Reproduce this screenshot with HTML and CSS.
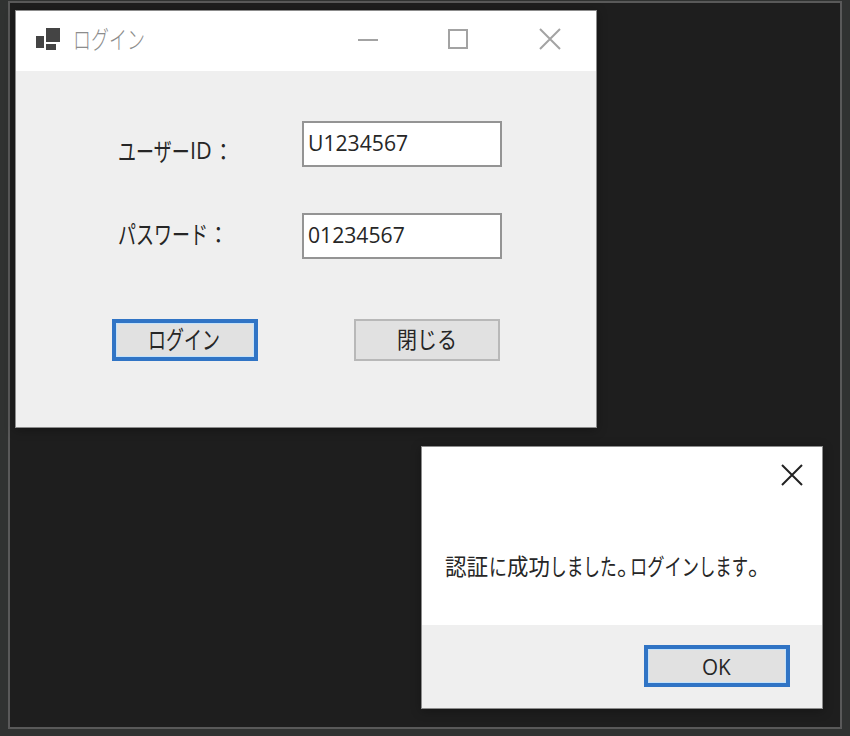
FILE: index.html
```html
<!DOCTYPE html>
<html lang="ja">
<head>
<meta charset="utf-8">
<title>ログイン</title>
<link rel="stylesheet" href="styles.css">
</head>
<body>
<main class="desktop">
  <section class="window login">
    <header class="titlebar">
      <svg class="app-icon" width="26" height="24" viewBox="0 0 26 24"><path d="M11 1h14v14H11zM1 9h8v12H1zM11 17h10v6H11z" fill="#444"/></svg>
      <h1 class="title"><span class="kana">ログイン</span></h1>
      <svg class="controls" width="204" height="24" viewBox="0 0 204 24" fill="none" stroke="#a3a3a3" stroke-width="2"><path d="M1 13H21"/><path d="M92 3H110V21H92z"/><path d="M183 2L203 22M203 2L183 22"/></svg>
    </header>
    <div class="fields">
      <label class="label user" for="uid"><span class="kana">ユーザー</span><span class="latin">ID</span><span class="colon">：</span></label>
      <div class="input" id="uid"><span class="latin">U1234567</span></div>
      <label class="label pass" for="pwd"><span class="kana">パスワード</span><span class="colon">：</span></label>
      <div class="input" id="pwd"><span class="latin">01234567</span></div>
    </div>
    <div class="actions">
      <button class="button primary"><span class="kana">ログイン</span></button>
      <button class="button"><span class="close-text">閉じる</span></button>
    </div>
  </section>
  <section class="window dialog">
    <div class="dialog-body">
      <svg class="dialog-close" width="22" height="22" viewBox="0 0 22 22" fill="none" stroke="#222" stroke-width="2"><path d="M1 1L21 21M21 1L1 21"/></svg>
      <p class="message"><span class="m1">認証</span><span class="m2">に</span><span class="m3">成功</span><span class="m4">しました</span><span class="m5">。</span><span class="m6">ログイン</span><span class="m7">します</span><span class="m8">。</span></p>
    </div>
    <footer class="dialog-foot">
      <button class="button primary"><span class="latin ok">OK</span></button>
    </footer>
  </section>
</main>
</body>
</html>
```
FILE: styles.css
```css
* { box-sizing: border-box; }
body {
  margin: 0;
  width: 850px;
  height: 736px;
  padding: 1px 8px 7px;
  background: #303231;
  font-family: "Open Sans", "Noto Sans CJK JP", sans-serif;
  color: #262626;
  overflow: hidden;
}
.desktop {
  position: relative;
  height: 728px;
  width: 834px;
  border: 2px solid #595959;
  background: #1e1e1e;
}
.window { position: absolute; background: #efefef; border: 1px solid #8c8c8c; box-shadow: 0 2px 10px rgba(0, 0, 0, .3); }
.login { left: 5px; top: 7px; width: 582px; height: 418px; }
.dialog { left: 411px; top: 443px; width: 402px; height: 263px; }
span { display: inline-block; white-space: nowrap; transform-origin: 0 50%; }

.titlebar {
  display: flex;
  align-items: center;
  height: 60px;
  padding: 0 35px 4px 19px;
  background: #fff;
}
.title { margin: -2px 0 0 12px; font-size: 25px; font-weight: 300; line-height: 30px; color: #8c8c8c; width: 75px; }
.controls { margin-left: auto; }

.kana { font-family: "Noto Sans CJK JP", sans-serif; font-size: 25px; width: 72px; transform: scaleX(.72); }
.latin { font-family: "Open Sans", sans-serif; transform: scaleX(.94); }

.fields {
  display: grid;
  grid-template-columns: 183px 200px;
  row-gap: 46px;
  padding: 50px 0 0 103px;
}
.label, .input { height: 46px; font-size: 23px; line-height: 32px; }
.label { display: flex; }
.label .kana { margin-left: -1px; }
.user { padding-top: 13px; }
.pass { padding-top: 4px; }
.pass .kana { width: 90px; }
.user .latin { width: 23px; }
.colon { font-family: "Noto Sans CJK JP", sans-serif; transform: scaleX(.9); }
.input { border: 2px solid #949494; background: #fff; padding: 4px 0 0 4px; font-size: 22.5px; }

.actions { display: flex; gap: 96px; padding: 60px 0 0 96px; }
.button {
  display: flex;
  justify-content: center;
  width: 146px;
  height: 42px;
  padding: 0;
  border: 2px solid #b8b8b8;
  background: #e1e1e1;
  color: #262626;
  font-size: 23px;
  line-height: 34px;
}
.primary { border: 4px solid #3074c5; line-height: 31px; box-shadow: inset 0 0 0 1px #c3e2fb; }
.button .kana { margin-left: -2px; }
.close-text { font-family: "Noto Sans CJK JP", sans-serif; width: 60px; transform: scaleX(.87); }
.ok { font-size: 22px; line-height: 35px; width: 30px; transform: scaleX(.94); }

.dialog { display: flex; flex-direction: column; }
.dialog-body { height: 178px; background: #fff; padding: 17px 19px 0 23px; }
.dialog-close { display: block; margin-left: auto; }
.message { display: flex; margin: 63px 0 0; font-family: "Noto Sans CJK JP", sans-serif; font-size: 23px; line-height: 32px; }
.m1 { width: 44px; transform: scaleX(.94); }
.m2 { width: 18px; transform: scaleX(.78); }
.m3 { width: 43px; transform: scaleX(.93); }
.m4 { width: 67px; transform: scaleX(.725); }
.m5 { width: 13px; font-feature-settings: "halt"; }
.m6 { width: 69px; transform: scaleX(.75); }
.m7 { width: 49px; transform: scaleX(.71); }
.m8 { font-feature-settings: "halt"; }
.dialog-foot { flex: 1; display: flex; justify-content: flex-end; padding: 20px 32px 0 0; }
```
